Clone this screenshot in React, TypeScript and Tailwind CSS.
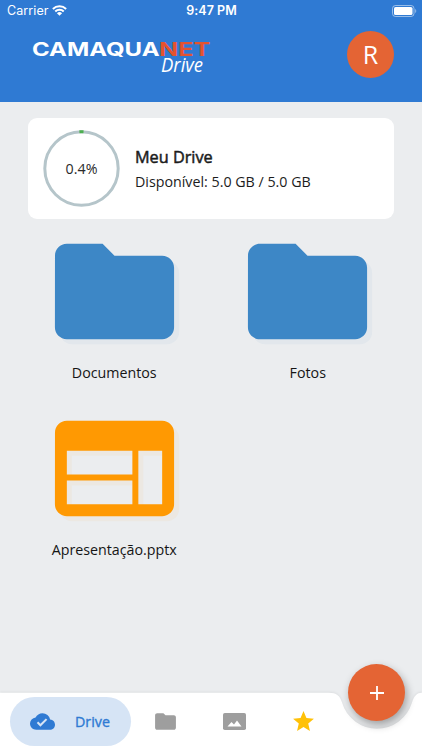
import React from "react";
import { MdCloudDone, MdFolder, MdStar, MdWeb } from "react-icons/md";
import type { IconType } from "react-icons";

type DriveItem = {
  name: string;
  icon: IconType;
  color: string;
  shadow: string;
};

const items: DriveItem[] = [
  { name: "Documentos", icon: MdFolder, color: "text-[#3d87c6]", shadow: "text-[#3d87c6]/5" },
  { name: "Fotos", icon: MdFolder, color: "text-[#3d87c6]", shadow: "text-[#3d87c6]/5" },
  { name: "Apresentação.pptx", icon: MdWeb, color: "text-[#ff9902]", shadow: "text-[#ff9902]/5" },
];

function StatusBar() {
  return (
    <div className="grid h-[22px] grid-cols-3 items-center pl-[7px] pr-[5px] font-['Inter',sans-serif] text-white">
      <div className="flex items-center gap-[3px]">
        <span className="text-[12.5px] tracking-[0.1px]">Carrier</span>
        <svg className="mb-px h-[11px] w-[15px]" viewBox="0 0 17 12" fill="none">
          <path d="M1 4.300a10.800 10.800 0 0 1 15 0M3.700 7.200a6.900 6.900 0 0 1 9.600 0" stroke="currentColor" strokeWidth="2.300" />
          <path d="M8.500 12 5.600 9.100a4.200 4.200 0 0 1 5.800 0z" fill="currentColor" />
        </svg>
      </div>
      <span className="-ml-px text-center text-[12.5px] font-semibold tracking-[0.05px]">9:47 PM</span>
      <svg className="mb-px h-[12px] w-[25px] justify-self-end" viewBox="0 0 25 12" fill="none">
        <rect x="0.5" y="0.5" width="21.5" height="11" rx="3" stroke="currentColor" strokeOpacity="0.5" />
        <rect x="2" y="2" width="18.5" height="8" rx="1.6" fill="currentColor" />
        <path d="M23.2 4v4c1.4-.6 1.4-3.4 0-4z" fill="currentColor" fillOpacity="0.5" />
      </svg>
    </div>
  );
}

function Logo() {
  return (
    <svg className="h-[42px] w-[180px]" viewBox="0 0 180 42">
      <g fontFamily="Inter, sans-serif" fontWeight="700" fontSize="18.500">
        <text x="0" y="17.500" textLength="127.500" lengthAdjust="spacingAndGlyphs" fill="#fff">
          CAMAQUA
        </text>
        <text x="127" y="17.500" textLength="51.500" lengthAdjust="spacingAndGlyphs" fill="#e4532f">
          NET
        </text>
      </g>
      <text
        x="129"
        y="34"
        textLength="42"
        lengthAdjust="spacingAndGlyphs"
        fontFamily="'Open Sans', sans-serif"
        fontStyle="italic"
        fontSize="19.500"
        fill="#fff"
      >
        Drive
      </text>
    </svg>
  );
}

function Header() {
  return (
    <header className="h-[102px] bg-[#2f7ad3]">
      <StatusBar />
      <div className="flex items-start justify-between pl-8 pr-[28px] pt-[9px]">
        <div className="pt-[7px]">
          <Logo />
        </div>
        <div className="flex size-[47px] items-center justify-center rounded-full bg-[#e46434] text-[25px] text-white">
          R
        </div>
      </div>
    </header>
  );
}

function UsageCard() {
  const percent = 0.4;

  return (
    <section className="mx-7 mt-4 flex h-[101px] items-center rounded-[9px] bg-white pl-[15px]">
      <div className="grid size-[77px] place-items-center">
        <svg className="col-start-1 row-start-1 size-[77px] -rotate-90" viewBox="0 0 77 77" fill="none">
          <circle cx="38.5" cy="38.5" r="36.7" stroke="#b5c5ca" strokeWidth="3" />
          {/* the arc is centred on the top and kept wide enough to stay visible */}
          <circle
            cx="38.5"
            cy="38.5"
            r="36.7"
            stroke="#4caf50"
            strokeWidth="3"
            pathLength="100"
            strokeDasharray={`${percent * 4.5} 100`}
            transform={`rotate(${percent * -8.1} 38.5 38.5)`}
          />
        </svg>
        <span className="col-start-1 row-start-1 text-[14.25px] text-[#2a2a2a]">{percent}%</span>
      </div>
      <div className="ml-[15px] flex flex-col gap-1">
        <h1 className="text-[16.25px] leading-[22px] text-[#1c1c1c] [-webkit-text-stroke:0.5px_currentColor]">
          Meu Drive
        </h1>
        <p className="text-[14.25px] leading-5 text-[#1c1c1c]">Disponível: 5.0 GB / 5.0 GB</p>
      </div>
    </section>
  );
}

function Item({ name, icon: Icon, color, shadow }: DriveItem) {
  return (
    <div className="flex h-[177px] flex-col items-center">
      <div className="relative size-[143px]">
        <Icon className={`absolute left-[5px] top-[5px] size-[143px] ${shadow}`} />
        <Icon className={`relative size-[143px] ${color}`} />
      </div>
      <span className="text-[14.25px] leading-5 text-[#151515]">{name}</span>
    </div>
  );
}

function BottomBar() {
  return (
    <nav className="relative h-[58px]">
      {/* bar surface with the notch cut out for the add button */}
      <svg className="absolute -top-2 left-0 h-[66px] w-[422px] overflow-visible" viewBox="0 -8 422 66">
        <path
          className="drop-shadow-[0_-1px_1px_rgba(0,0,0,0.06)]"
          d="M0 .8H328C337 .8 340 4 342 10.500A36.500 36.500 0 0 0 412 10.500C414 4 417 .8 422 .8V58H0Z"
          fill="#fff"
        />
      </svg>
      <div className="relative flex h-full items-center pl-[10px]">
        <button className="flex h-[49px] w-[121px] items-center rounded-full bg-[#d6e4f5] pl-5 text-[#2f7ad3]">
          <MdCloudDone className="size-[25px]" />
          <span className="ml-5 pt-px text-[14.25px] [-webkit-text-stroke:0.35px_currentColor]">Drive</span>
        </button>
        <MdFolder className="ml-[22px] size-[25px] text-[#9e9e9e]" />
        <svg className="ml-[45px] h-[17px] w-[23px] text-[#9e9e9e]" viewBox="0 0 23 17">
          <rect width="23" height="17" rx="1.800" fill="currentColor" />
          <path d="M4.500 13.500 8.500 9 11 11.500 14 7.500 18.500 13.500Z" fill="#fff" />
        </svg>
        <MdStar className="ml-[45px] size-[25px] text-[#ffc107]" />
      </div>
      <button className="absolute -top-[28px] left-[348px] flex size-[57px] items-center justify-center rounded-full bg-[#e46434] text-white shadow-[2px_4px_8px_rgba(0,0,0,0.33)]">
        <svg className="size-[14px]" viewBox="0 0 14 14" stroke="currentColor" strokeWidth="1.8">
          <path d="M7 0V14M0 7H14" />
        </svg>
      </button>
    </nav>
  );
}

export default function App() {
  return (
    <div className="flex h-[750px] w-[422px] flex-col overflow-hidden bg-[#ebedef] font-['Open_Sans',sans-serif]">
      <Header />
      <main className="flex-1">
        <UsageCard />
        <div className="mx-[17.500px] mt-[1px] grid grid-cols-2">
          {items.map((item) => (
            <Item key={item.name} {...item} />
          ))}
        </div>
      </main>
      <BottomBar />
    </div>
  );
}
